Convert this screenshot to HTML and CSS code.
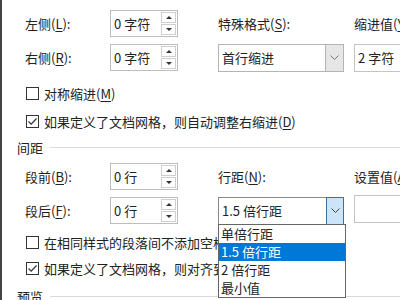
FILE: index.html
```html
<!DOCTYPE html>
<html lang="zh-CN">
    <head>
        <meta charset="UTF-8">
        <title>段落</title>
        <link rel="stylesheet" href="styles.css">
    </head>
    <body>
        <div class="dialog">
            <!-- 缩进 -->
            <div class="grid">
                <span class="label">左侧(<u>L</u>):</span>
                <div class="spin">
                    <span>0 字符</span>
                    <div class="spin-btns"><i class="up"></i><i class="down"></i></div>
                </div>
                <span class="label">特殊格式(<u>S</u>):</span>
                <span class="label">缩进值(<u>Y</u>):</span>

                <span class="label">右侧(<u>R</u>):</span>
                <div class="spin">
                    <span>0 字符</span>
                    <div class="spin-btns"><i class="up"></i><i class="down"></i></div>
                </div>
                <div class="select">
                    <span class="val">首行缩进</span>
                    <span class="arrow"><svg width="9" height="5" viewBox="0 0 9 5"><path d="M0.5 0.5 L4.5 4.5 L8.5 0.5" fill="none" stroke="#777" stroke-width="1"/></svg></span>
                </div>
                <div class="text-input">2 字符</div>
            </div>

            <div class="check first"><span class="box"></span><span>对称缩进(<u>M</u>)</span></div>
            <div class="check second"><span class="box"><svg width="11" height="11" viewBox="0 0 11 11"><path d="M1.5 5.5 L4.2 8.2 L9.5 2.5" fill="none" stroke="#333" stroke-width="1.2"/></svg></span><span>如果定义了文档网格，则自动调整右缩进(<u>D</u>)</span></div>

            <div class="heading">间距</div>

            <div class="grid spacing">
                <span class="label">段前(<u>B</u>):</span>
                <div class="spin">
                    <span>0 行</span>
                    <div class="spin-btns"><i class="up"></i><i class="down"></i></div>
                </div>
                <span class="label">行距(<u>N</u>):</span>
                <span class="label">设置值(<u>A</u>):</span>

                <span class="label">段后(<u>F</u>):</span>
                <div class="spin">
                    <span>0 行</span>
                    <div class="spin-btns"><i class="up"></i><i class="down"></i></div>
                </div>
                <div class="select open">
                    <span class="val">1.5 倍行距</span>
                    <span class="arrow"><svg width="9" height="5" viewBox="0 0 9 5"><path d="M0.5 0.5 L4.5 4.5 L8.5 0.5" fill="none" stroke="#444" stroke-width="1"/></svg></span>
                    <div class="list">
                        <div>单倍行距</div>
                        <div class="sel">1.5 倍行距</div>
                        <div>2 倍行距</div>
                        <div>最小值</div>
                    </div>
                </div>
                <div class="text-input raised"></div>
            </div>

            <div class="check third"><span class="box"></span><span>在相同样式的段落间不添加空格(<u>C</u>)</span></div>
            <div class="check fourth"><span class="box"><svg width="11" height="11" viewBox="0 0 11 11"><path d="M1.5 5.5 L4.2 8.2 L9.5 2.5" fill="none" stroke="#333" stroke-width="1.2"/></svg></span><span>如果定义了文档网格，则对齐到网格(<u>W</u>)</span></div>

            <div class="heading preview">预览</div>
        </div>
    </body>
</html>
```

FILE: styles.css
```css
body {
    margin: 0;
    font-family: "Noto Sans CJK SC", sans-serif;
    font-size: 13px;
    color: #222;
    background-color: #fff;
}

.dialog {
    width: 400px;
    height: 300px;
    box-sizing: border-box;
    border-left: 2px solid #444;
    padding-top: 10px;
    overflow: hidden;
}

.grid {
    display: grid;
    grid-template-columns: 85px 108px 136px 80px;
    grid-auto-rows: 27px;
    row-gap: 7px;
    padding-left: 23px;
    align-items: center;
}

.spacing {
    margin-top: 4px;
}

.label {
    white-space: nowrap;
    line-height: 1;
}

u {
    text-underline-offset: 2px;
}

.spin {
    width: 68px;
    height: 27px;
    box-sizing: border-box;
    border: 1px solid #bdbdbd;
    display: flex;
    align-items: center;
    justify-content: space-between;
    padding: 1px 1px 1px 3px;
}

.spin-btns {
    width: 15px;
    height: 100%;
    display: flex;
    flex-direction: column;
    gap: 1px;
}

.spin-btns i {
    flex: 1;
    border: 1px solid #cfcfcf;
    display: flex;
    align-items: center;
    justify-content: center;
}

.spin-btns i::after {
    content: "";
    border-left: 3px solid transparent;
    border-right: 3px solid transparent;
}

.up::after {
    border-bottom: 3px solid #333;
}

.down::after {
    border-top: 3px solid #333;
}

.select {
    width: 126px;
    height: 28px;
    box-sizing: border-box;
    border: 1px solid #b4b4b4;
    display: flex;
    align-items: center;
    position: relative;
}

.select .val {
    flex: 1;
    padding-left: 3px;
    white-space: nowrap;
}

.select .arrow {
    width: 18px;
    height: 100%;
    box-sizing: border-box;
    border-left: 1px solid #b4b4b4;
    background-color: #e6e6e6;
    display: flex;
    align-items: center;
    justify-content: center;
}

.select.open {
    border-color: #8a8a8a;
}

.select.open .arrow {
    background-color: #cce4f7;
    border: 1px solid #3d6f99;
    margin-right: -1px;
    height: calc(100% + 2px);
}

.list {
    position: absolute;
    top: 100%;
    left: -1px;
    width: 128px;
    box-sizing: border-box;
    border: 1px solid #666;
    background-color: #fff;
    z-index: 2;
}

.list div {
    height: 18px;
    line-height: 18px;
    padding-left: 2px;
    white-space: nowrap;
}

.list .sel {
    background-color: #0078d7;
    color: #fff;
}

.text-input {
    width: 80px;
    height: 28px;
    box-sizing: border-box;
    border: 1px solid #c4c4c4;
    padding-left: 3px;
    line-height: 26px;
    white-space: nowrap;
}

.text-input.raised {
    margin-top: -3px;
}

.check {
    display: flex;
    align-items: center;
    gap: 5px;
    height: 26px;
    padding-left: 24px;
    white-space: nowrap;
}

.check.first {
    margin-top: 9px;
}

.check.second {
    margin-top: 2px;
}

.check.third {
    margin-top: 5px;
}

.box {
    width: 13px;
    height: 13px;
    flex-shrink: 0;
    box-sizing: border-box;
    border: 1px solid #333;
    display: flex;
    align-items: center;
    justify-content: center;
}

.heading {
    display: flex;
    align-items: center;
    height: 24px;
    padding-left: 15px;
    margin-top: 1px;
}

.heading::after {
    content: "";
    flex: 1;
    height: 1px;
    background-color: #dadada;
    margin-left: 7px;
}

.heading.preview {
    margin-top: 3px;
}
```
